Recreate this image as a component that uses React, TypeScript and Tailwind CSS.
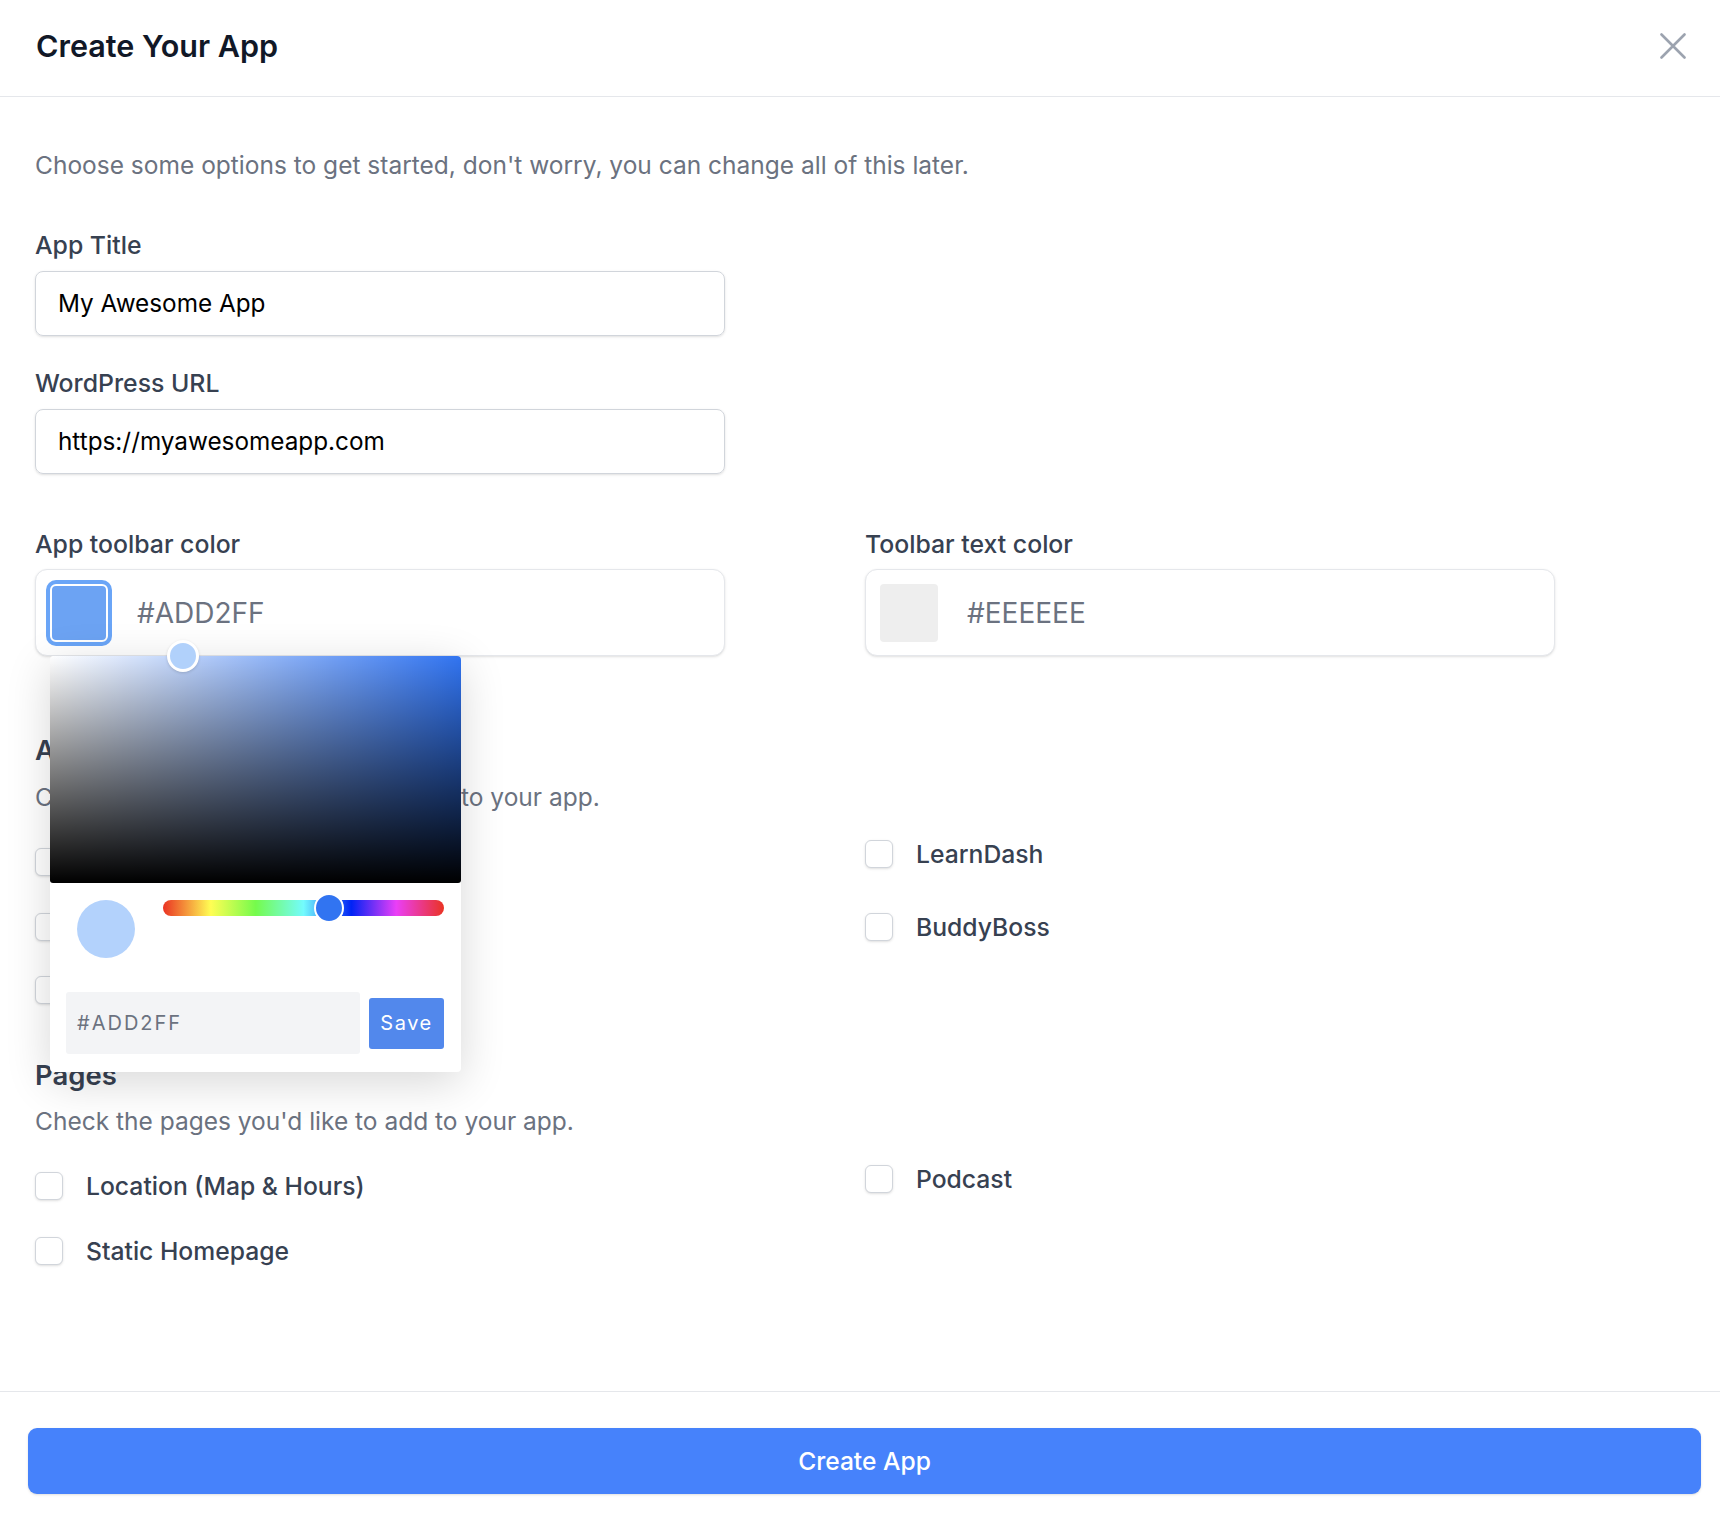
import React from "react";

function Check({ label }: { label: string }) {
  return (
    <div className="flex items-center h-[36px]">
      <div className="w-[28px] h-[28px] shrink-0 rounded-[6px] border border-[#d1d5db] bg-white shadow-sm" />
      <span className="ml-[23px] text-[24.7px] leading-[36px] font-medium text-[#374151] whitespace-nowrap">{label}</span>
    </div>
  );
}

function ColorPopover() {
  return (
    <div className="absolute left-[14px] top-[86px] z-10 w-[411px] bg-white rounded-[4px] shadow-[0_10px_45px_rgba(0,0,0,0.16)]">
      <div className="relative h-[227px] rounded-t-[4px] rounded-b-[3px] bg-[#3174f1] bg-[linear-gradient(to_top,#000,rgba(0,0,0,0)),linear-gradient(to_right,#fff,rgba(255,255,255,0))]">
        <div className="absolute left-[133px] top-0 w-[32px] h-[32px] -translate-x-1/2 -translate-y-1/2 rounded-full border-[3px] border-white bg-[#b1d1fb] shadow-[0_1px_3px_rgba(0,0,0,0.15)]" />
      </div>
      <div className="pl-[16px] pr-[17px] pt-[17px] pb-[18px]">
        <div className="flex items-start">
          <div className="ml-[11px] w-[58px] h-[58px] shrink-0 rounded-full bg-[#b3d2fc]" />
          <div className="relative ml-[28px] flex-1 h-[16px] rounded-full bg-[linear-gradient(to_right,#ea3323_0%,#fffe54_17%,#75fb4c_33%,#73fbfd_50%,#0023f5_67%,#ea3ff7_83%,#ea3323_100%)]">
            <div className="absolute left-[166px] top-1/2 w-[30px] h-[30px] -translate-x-1/2 -translate-y-1/2 rounded-full border-[2px] border-white bg-[#3174f1]" />
          </div>
        </div>
        <div className="mt-[34px] flex items-center gap-[9px]">
          <div className="w-[294px] h-[62px] flex items-center pl-[11px] rounded-[3px] bg-[#f3f4f6] text-[20px] tracking-[2px] text-[#6b7280]">
            #ADD2FF
          </div>
          <button className="w-[75px] h-[51px] flex items-center justify-center rounded-[3px] bg-[#5288ec] text-white text-[20px] tracking-[1.5px]">
            Save
          </button>
        </div>
      </div>
    </div>
  );
}

export default function App() {
  return (
    <div className="w-[1720px] h-[1524px] bg-white font-[family-name:Inter,sans-serif] flex flex-col overflow-hidden">
      <header className="h-[97px] shrink-0 border-b border-[#e5e7eb] flex items-center justify-between pl-[36px] pr-[34px] pb-[4px]">
        <h1 className="text-[30.5px] leading-[36px] font-semibold text-[#111827]">Create Your App</h1>
        <button aria-label="Close" className="w-[26px] h-[26px] flex items-center justify-center">
          <svg width="26" height="26" viewBox="0 0 26 26" fill="none">
            <path d="M1.5 1.5L24.5 24.5M24.5 1.5L1.5 24.5" stroke="#9ca3af" strokeWidth="2.6" strokeLinecap="round" />
          </svg>
        </button>
      </header>

      <main className="h-[1294px] shrink-0 pl-[35px] flex flex-col">
        <p className="mt-[52px] text-[24.5px] leading-[32px] text-[#6b7280]">
          Choose some options to get started, don't worry, you can change all of this later.
        </p>

        <label className="mt-[48px] text-[24.8px] leading-[32px] font-medium text-[#374151]">App Title</label>
        <div className="mt-[10px] w-[690px] h-[65px] flex items-center px-[22px] rounded-[8px] border border-[#d1d5db] shadow-sm text-[24.3px] text-black">
          My Awesome App
        </div>

        <label className="mt-[31px] text-[24.8px] leading-[32px] font-medium text-[#374151]">WordPress URL</label>
        <div className="mt-[10px] w-[690px] h-[65px] flex items-center px-[22px] rounded-[8px] border border-[#d1d5db] shadow-sm text-[24.3px] text-black">
          https://myawesomeapp.com
        </div>

        <div className="mt-[54px] grid grid-cols-[690px_690px] gap-x-[140px]">
          <div className="flex flex-col">
            <span className="text-[24.8px] leading-[32px] font-medium text-[#374151]">App toolbar color</span>
            <div className="relative mt-[9px] h-[87px] flex items-center pl-[14px] rounded-[12px] border border-[#e5e7eb] shadow-sm bg-white">
              <div className="w-[58px] h-[58px] rounded-[6px] border-[2px] border-white bg-[#6ca3f3] ring-[4px] ring-[#6aa5f7]" />
              <span className="ml-[29px] text-[28px] text-[#6b7280]">#ADD2FF</span>
              <ColorPopover />
            </div>
          </div>
          <div className="flex flex-col">
            <span className="text-[24.8px] leading-[32px] font-medium text-[#374151]">Toolbar text color</span>
            <div className="mt-[9px] h-[87px] flex items-center pl-[14px] rounded-[12px] border border-[#e5e7eb] shadow-sm bg-white">
              <div className="w-[58px] h-[58px] rounded-[4px] bg-[#eeeeee]" />
              <span className="ml-[29px] text-[28px] text-[#6b7280]">#EEEEEE</span>
            </div>
          </div>
        </div>

        <h2 className="mt-[76px] text-[27.5px] leading-[36px] font-semibold text-[#374151]">Add-ons</h2>
        <p className="mt-[13px] text-[24.5px] leading-[32px] text-[#6b7280]">Check the add-ons you'd like to add to your app.</p>
        <div className="grid grid-cols-[830px_690px]">
          <div className="flex flex-col pt-[31px]">
            <Check label="WooCommerce" />
            <div className="mt-[29px]"><Check label="Events Calendar" /></div>
            <div className="mt-[27px]"><Check label="Gravity Forms" /></div>
          </div>
          <div className="flex flex-col pt-[23px]">
            <Check label="LearnDash" />
            <div className="mt-[37px]"><Check label="BuddyBoss" /></div>
          </div>
        </div>

        <h2 className="mt-[49px] text-[27.5px] leading-[36px] font-semibold text-[#374151]">Pages</h2>
        <p className="mt-[12px] text-[24.5px] leading-[32px] text-[#6b7280]">Check the pages you'd like to add to your app.</p>
        <div className="grid grid-cols-[830px_690px]">
          <div className="flex flex-col pt-[31px]">
            <Check label="Location (Map & Hours)" />
            <div className="mt-[29px]"><Check label="Static Homepage" /></div>
          </div>
          <div className="flex flex-col pt-[24px]">
            <Check label="Podcast" />
          </div>
        </div>
      </main>

      <footer className="flex-1 border-t border-[#e5e7eb] pt-[36px] pl-[28px] pr-[19px]">
        <button className="w-full h-[66px] rounded-[9px] bg-[#4682fb] text-white text-[24.6px] font-medium shadow-sm">
          Create App
        </button>
      </footer>
    </div>
  );
}
